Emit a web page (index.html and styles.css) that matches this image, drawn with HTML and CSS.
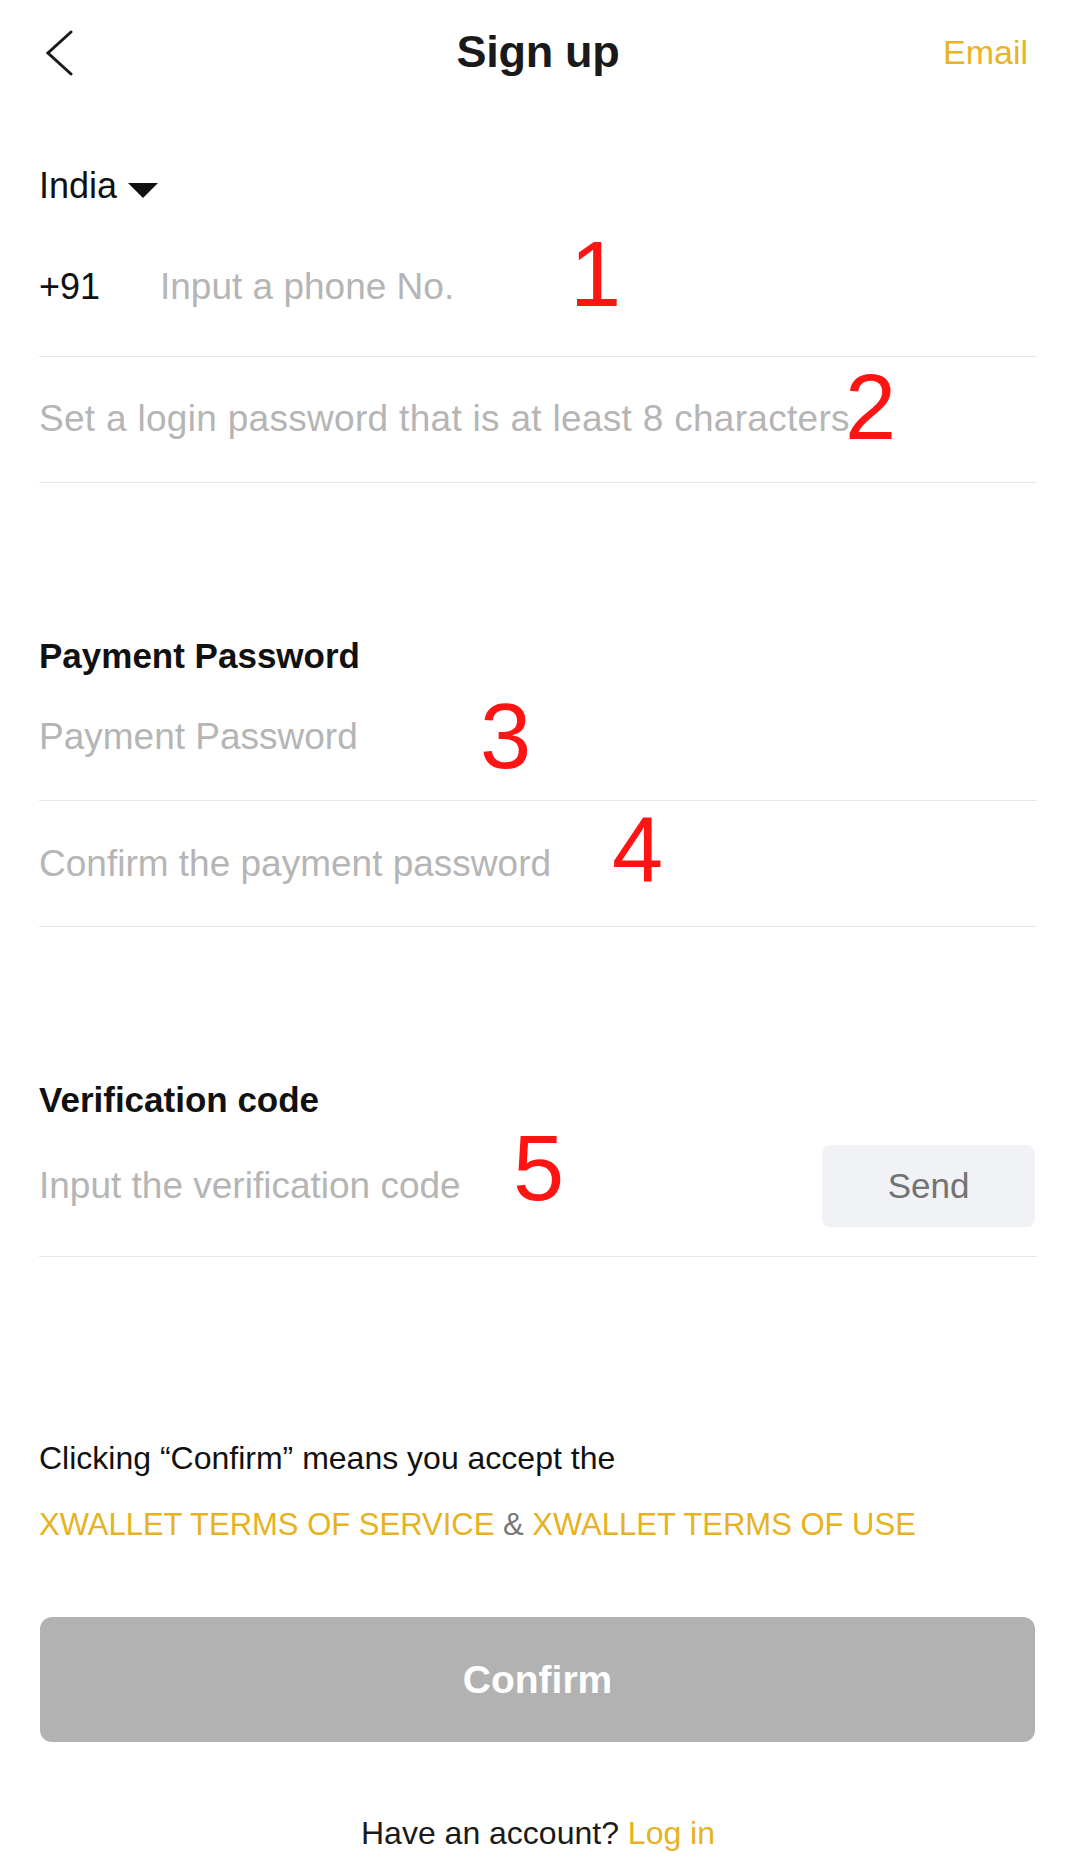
FILE: index.html
```html
<!DOCTYPE html>
<html lang="en">
<head>
<meta charset="utf-8">
<title>Sign up</title>
<link rel="stylesheet" href="styles.css">
</head>
<body>
<div class="page">
  <header class="header">
    <svg class="back" viewBox="0 0 30 48" width="30" height="48" aria-hidden="true">
      <polyline points="25,4 2,25 25,46" fill="none" stroke="#1a1a1a" stroke-width="3" stroke-linecap="round" stroke-linejoin="miter"/>
    </svg>
    <h1 class="title">Sign up</h1>
    <a class="email">Email</a>
  </header>

  <div class="country">India<span class="caret"></span></div>

  <div class="field field-phone">
    <span class="code">+91</span>
    <input class="input" type="tel" placeholder="Input a phone No.">
  </div>
  <div class="field field-pass">
    <input class="input input-wide" type="password" placeholder="Set a login password that is at least 8 characters">
  </div>

  <h2 class="section-title">Payment Password</h2>
  <div class="field field-pay">
    <input class="input" type="password" placeholder="Payment Password">
  </div>
  <div class="field field-confirm">
    <input class="input" type="password" placeholder="Confirm the payment password">
  </div>

  <h2 class="section-title">Verification code</h2>
  <div class="field field-verify">
    <input class="input" type="text" placeholder="Input the verification code">
    <button class="send" type="button">Send</button>
  </div>

  <p class="agree">Clicking “Confirm” means you accept the</p>
  <p class="terms"><a class="link">XWALLET TERMS OF SERVICE</a> <span class="amp">&amp;</span> <a class="link">XWALLET TERMS OF USE</a></p>

  <button class="confirm" type="button">Confirm</button>

  <p class="footer">Have an account? <a class="link">Log in</a></p>

  <span class="mark m1">1</span>
  <span class="mark m2">2</span>
  <span class="mark m3">3</span>
  <span class="mark m4">4</span>
  <span class="mark m5">5</span>
</div>
</body>
</html>
```

FILE: styles.css
```css
html, body {
  margin: 0;
  padding: 0;
  background: #ffffff;
}

body {
  font-family: "Liberation Sans", Arial, sans-serif;
  color: #111111;
}

.page {
  position: relative;
  width: 1077px;
  min-height: 1860px;
  box-sizing: border-box;
  padding: 0 40px 0 39px;
}

.header {
  height: 104px;
  display: grid;
  grid-template-columns: 1fr auto 1fr;
  align-items: center;
}

.back {
  display: block;
  margin-left: 7px;
}

.title {
  margin: 0;
  font-size: 45px;
  line-height: 52px;
  font-weight: bold;
  color: #1a1a1a;
  letter-spacing: -0.3px;
}

.email {
  justify-self: end;
  margin-right: 9px;
  font-size: 34px;
  color: #e8b424;
}

.country {
  margin-top: 60px;
  height: 44px;
  display: flex;
  align-items: center;
  font-size: 36px;
  line-height: 44px;
  color: #111111;
}

.caret {
  width: 0;
  height: 0;
  border-left: 15px solid transparent;
  border-right: 15px solid transparent;
  border-top: 15px solid #111111;
  margin-left: 11px;
  margin-top: 8px;
}

.field {
  display: flex;
  align-items: center;
  border-bottom: 1px solid #e6e6e6;
}

.field-phone { padding: 57px 0 47px; }
.field-pass { padding: 40px 0 41px; }
.field-pay { padding: 37px 0 41px; }
.field-confirm { padding: 41px 0 40px; }
.field-verify { padding: 23px 0 29px; }

.code {
  width: 121px;
  flex: none;
  font-size: 36px;
  line-height: 44px;
  color: #111111;
}

.input {
  flex: 1;
  min-width: 0;
  height: 44px;
  padding: 0;
  border: 0;
  outline: 0;
  background: transparent;
  font-family: "Liberation Sans", Arial, sans-serif;
  font-size: 37px;
  color: #111111;
}

.input-wide {
  letter-spacing: 0.3px;
}

.input::placeholder {
  color: #b5b5b5;
}

.section-title {
  margin: 151px 0 0;
  font-size: 35px;
  line-height: 44px;
  font-weight: bold;
  color: #111111;
}

.send {
  flex: none;
  width: 213px;
  height: 82px;
  margin-right: 2px;
  border: 0;
  border-radius: 8px;
  background: #f1f2f5;
  color: #737373;
  font-family: "Liberation Sans", Arial, sans-serif;
  font-size: 35px;
}

.agree {
  margin: 181px 0 0;
  font-size: 32px;
  line-height: 40px;
  color: #111111;
}

.terms {
  margin: 27px 0 0;
  font-size: 31px;
  line-height: 40px;
}

.link {
  color: #e6b21e;
}

.amp {
  color: #777777;
}

.confirm {
  display: block;
  width: 995px;
  height: 125px;
  margin: 72px 0 0 1px;
  border: 0;
  border-radius: 12px;
  background: #b2b2b2;
  color: #ffffff;
  font-family: "Liberation Sans", Arial, sans-serif;
  font-size: 39px;
  font-weight: bold;
}

.footer {
  margin: 71px 0 0;
  text-align: center;
  font-size: 32px;
  line-height: 40px;
  color: #1a1a1a;
}

.mark {
  position: absolute;
  font-family: "Liberation Sans", Arial, sans-serif;
  font-size: 92px;
  line-height: 92px;
  color: #ff1414;
}

.m1 { left: 570px; top: 228px; }
.m2 { left: 845px; top: 361px; }
.m3 { left: 480px; top: 690px; }
.m4 { left: 612px; top: 803px; }
.m5 { left: 513px; top: 1122px; }
```
